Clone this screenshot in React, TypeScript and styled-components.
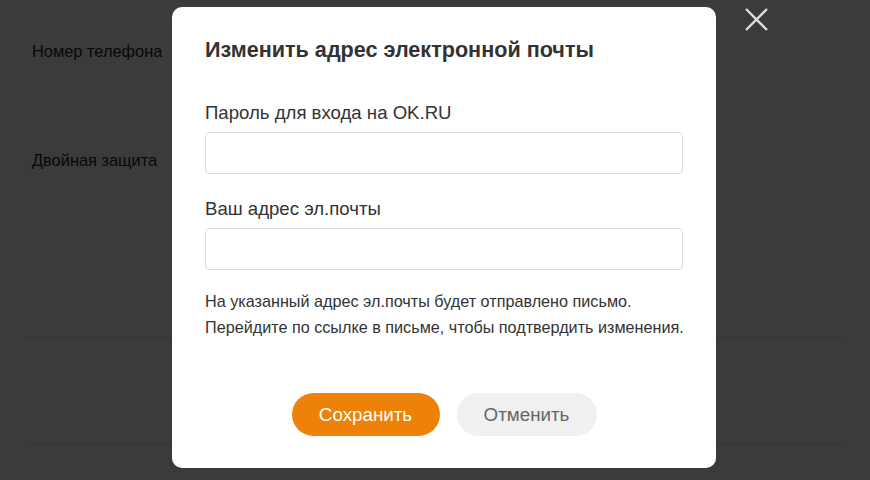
import React, { useState } from 'react';
import styled, { createGlobalStyle } from 'styled-components';

const GlobalStyle = createGlobalStyle`
  html, body {
    margin: 0;
    padding: 0;
    width: 100%;
    height: 100%;
    overflow: hidden;
    background: #fff;
    font-family: "Liberation Sans", Arial, sans-serif;
  }
`;

const Page = styled.div`
  width: 100%;
  height: 480px;
  padding: 0 25px;
  box-sizing: border-box;
  display: flex;
  flex-direction: column;
  overflow: hidden;
`;

const Row = styled.div<{ $height: number; $pad: number; $line?: boolean }>`
  height: ${(p) => p.$height}px;
  padding-top: ${(p) => p.$pad}px;
  padding-left: 7px;
  box-sizing: border-box;
  flex-shrink: 0;
  border-bottom: ${(p) => (p.$line ? '1px solid #e4e4e4' : 'none')};
  font-size: 16.4px;
  line-height: 20px;
  color: #222;
`;

const Overlay = styled.div`
  position: fixed;
  inset: 0;
  background: rgba(0, 0, 0, 0.77);
  display: flex;
  align-items: flex-start;
  padding: 7px 0 0 172px;
`;

const Modal = styled.div`
  width: 544px;
  height: 461px;
  box-sizing: border-box;
  background: #fff;
  border-radius: 10px;
  padding: 31px 33px 32px;
  display: flex;
  flex-direction: column;
`;

const Title = styled.h2`
  margin: 0 0 41px;
  font-size: 21.6px;
  line-height: 24px;
  font-weight: 700;
  color: #333;
`;

const Label = styled.label`
  display: block;
  font-size: 18.6px;
  line-height: 20px;
  color: #333;
  margin-bottom: 9px;
`;

const Input = styled.input`
  display: block;
  width: 100%;
  height: 42px;
  box-sizing: border-box;
  border: 1px solid #dedede;
  border-radius: 4px;
  padding: 0 12px;
  font: 16px "Liberation Sans", Arial, sans-serif;
  color: #333;
  outline: none;
  margin-bottom: 25px;

  &.last {
    margin-bottom: 18px;
  }
`;

const Note = styled.p`
  margin: 0;
  font-size: 16.2px;
  line-height: 26px;
  color: #333;
  white-space: nowrap;
`;

const Actions = styled.div`
  margin-top: auto;
  display: flex;
  justify-content: center;
  gap: 17px;
`;

const Button = styled.button<{ $primary?: boolean }>`
  height: 43px;
  padding: 0 20px;
  border: none;
  border-radius: 22px;
  font: 18.8px "Liberation Sans", Arial, sans-serif;
  cursor: pointer;
  background: ${(p) => (p.$primary ? '#ee8208' : '#f0f0f0')};
  color: ${(p) => (p.$primary ? '#fff' : '#666')};
  width: ${(p) => (p.$primary ? 148 : 140)}px;
`;

const Close = styled.button`
  position: absolute;
  left: 744px;
  top: 7px;
  width: 25px;
  height: 25px;
  padding: 0;
  border: none;
  background: none;
  cursor: pointer;
`;

const App = () => {
  const [password, setPassword] = useState('');
  const [email, setEmail] = useState('');

  return (
    <>
      <GlobalStyle />
      <Page>
        <Row $height={105} $pad={41}>Номер телефона</Row>
        <Row $height={233} $pad={45} $line>Двойная защита</Row>
        <Row $height={107} $pad={40} $line />
        <Row $height={35} $pad={28} />
      </Page>
      <Overlay>
        <Modal>
          <Title>Изменить адрес электронной почты</Title>
          <Label>Пароль для входа на OK.RU</Label>
          <Input type="password" value={password} onChange={(e) => setPassword(e.target.value)} />
          <Label>Ваш адрес эл.почты</Label>
          <Input className="last" value={email} onChange={(e) => setEmail(e.target.value)} />
          <Note>
            На указанный адрес эл.почты будет отправлено письмо.
            <br />
            Перейдите по ссылке в письме, чтобы подтвердить изменения.
          </Note>
          <Actions>
            <Button $primary>Сохранить</Button>
            <Button>Отменить</Button>
          </Actions>
        </Modal>
        <Close aria-label="Закрыть">
          <svg width="25" height="25" viewBox="0 0 25 25">
            <path d="M2 2L23 23M23 2L2 23" stroke="#ddd" strokeWidth="2.4" />
          </svg>
        </Close>
      </Overlay>
    </>
  );
};

export default App;
